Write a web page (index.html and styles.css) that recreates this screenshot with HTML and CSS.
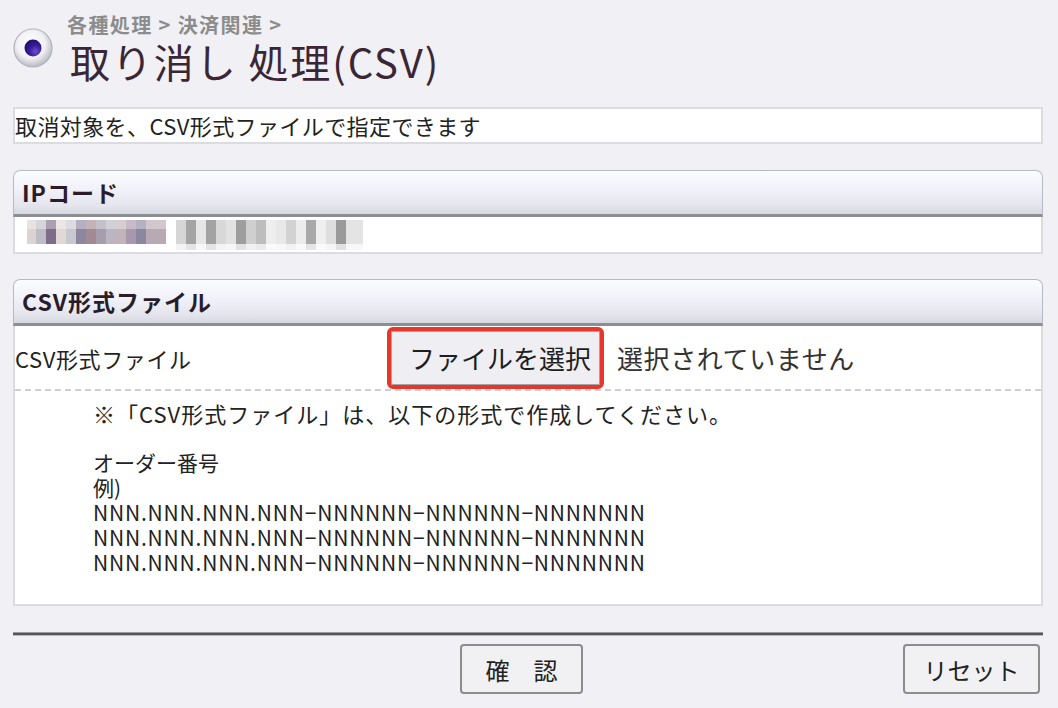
FILE: index.html
```html
<!DOCTYPE html>
<html lang="ja">
<head>
<meta charset="utf-8">
<title>取り消し 処理(CSV)</title>
<link rel="stylesheet" href="styles.css">
</head>
<body>
<div class="page">
  <header class="title-area">
    <svg class="orb" width="40" height="40" viewBox="0 0 40 40">
      <defs>
        <radialGradient id="shell" cx="45%" cy="40%" r="60%">
          <stop offset="0" stop-color="#ffffff"/>
          <stop offset="0.6" stop-color="#f2f2f6"/>
          <stop offset="1" stop-color="#b9b9c2"/>
        </radialGradient>
        <radialGradient id="dot" cx="65%" cy="70%" r="70%">
          <stop offset="0" stop-color="#6a50d0"/>
          <stop offset="0.5" stop-color="#3a1c9c"/>
          <stop offset="1" stop-color="#22106a"/>
        </radialGradient>
      </defs>
      <circle cx="20" cy="20" r="19" fill="url(#shell)" stroke="#b4b4bc" stroke-width="1.2"/>
      <circle cx="20" cy="20" r="8.5" fill="url(#dot)"/>
    </svg>
    <div class="titles">
      <div class="crumb">各種処理 &gt; 決済関連 &gt;</div>
      <h1 class="title">取り消し 処理(CSV)</h1>
    </div>
  </header>

  <div class="desc">取消対象を、CSV形式ファイルで指定できます</div>

  <section class="panel">
    <div class="panel-head">IPコード</div>
    <div class="panel-body ip-body">
      <span class="mosaic m1"></span>
      <span class="mosaic m2"></span>
    </div>
  </section>

  <section class="panel">
    <div class="panel-head">CSV形式ファイル</div>
    <div class="panel-body">
      <div class="file-row">
        <span class="row-label">CSV形式ファイル</span>
        <span class="file-input">
          <span class="file-btn">ファイルを選択</span>
          <span class="no-file">選択されていません</span>
        </span>
      </div>
      <div class="notes">
        <p class="note-lead">※「CSV形式ファイル」は、以下の形式で作成してください。</p>
        <p class="note-fmt">オーダー番号<br>例)<br><span class="nnn">NNN.NNN.NNN.NNN−NNNNNN−NNNNNN−NNNNNNN</span><br><span class="nnn">NNN.NNN.NNN.NNN−NNNNNN−NNNNNN−NNNNNNN</span><br><span class="nnn">NNN.NNN.NNN.NNN−NNNNNN−NNNNNN−NNNNNNN</span></p>
      </div>
    </div>
  </section>

  <div class="rule"></div>
  <div class="actions">
    <span></span>
    <button class="btn btn-confirm">確　認</button>
    <button class="btn btn-reset">リセット</button>
  </div>
</div>
</body>
</html>
```
FILE: styles.css
```css
html, body {
  margin: 0;
  padding: 0;
  background: #f0f0f5;
}
body {
  font-family: "Noto Sans CJK JP", "Liberation Sans", sans-serif;
  color: #222;
}
.page {
  width: 1030px;
  margin-left: 13px;
}
.title-area {
  height: 107px;
  display: flex;
  align-items: flex-start;
}
.orb {
  margin-top: 28px;
  flex: none;
}
.titles {
  margin-left: 14px;
  padding-top: 14px;
}
.crumb {
  font-size: 20px;
  font-weight: bold;
  line-height: 22px;
  letter-spacing: 1.4px;
  color: #8c8c8c;
}
.title {
  margin: 2px 0 0 3px;
  font-size: 40px;
  font-weight: normal;
  line-height: 46px;
  letter-spacing: 1.9px;
  color: #3a2636;
}
.desc {
  background: #fff;
  border: 2px solid #dcdce0;
  height: 33px;
  line-height: 33px;
  font-size: 22px;
  letter-spacing: 0.4px;
  color: #222;
  margin-bottom: 26px;
  white-space: nowrap;
}
.panel {
  margin-bottom: 25px;
}
.panel-head {
  height: 43px;
  line-height: 43px;
  border: 1px solid #b9b9c1;
  border-bottom: 3px solid #8d8d95;
  border-radius: 7px 7px 0 0;
  background: linear-gradient(#fbfcff 0%, #f2f3fa 40%, #e4e5ed 80%, #d6d7df 100%);
  padding-left: 8px;
  font-size: 23px;
  font-weight: bold;
  letter-spacing: 1px;
  color: #2b1c2a;
}
.panel-body {
  background: #fff;
  border: 2px solid #dcdce0;
  border-top: 0;
}
.ip-body {
  height: 35px;
  display: flex;
  align-items: flex-start;
  gap: 10px;
  padding-left: 12px;
}
.mosaic {
  display: block;
  margin-top: 3px;
}
.m1 {
  width: 139px;
  height: 24px;
  background:
    linear-gradient(180deg, rgba(255,255,255,0.35) 0 9px, rgba(255,255,255,0) 9px 24px),
    linear-gradient(90deg, #ddd3d3 0 9px, #bdbdc6 9px 19px, #7e6c88 19px 29px, #e2d8d6 29px 39px, #c8c8d0 39px 49px, #8c86a0 49px 59px, #a28a92 59px 69px, #a79ead 69px 79px, #b9b5c2 79px 89px, #c2b2ba 89px 99px, #a997ad 99px 109px, #8a87a1 109px 119px, #b9a9b2 119px 139px);
}
.m2 {
  width: 187px;
  height: 30px;
  background:
    linear-gradient(180deg, rgba(255,255,255,0) 0 24px, rgba(255,255,255,0.7) 24px 30px),
    linear-gradient(90deg, #d6d6d6 0 10px, #a5a5a5 10px 20px, #e6e6e6 20px 30px, #a3a3a3 30px 40px, #d8d8d8 40px 50px, #e2e2e2 50px 60px, #9e9e9e 60px 70px, #cfcfcf 70px 80px, #bdbdbd 80px 90px, #eeeeee 90px 100px, #e8e8e8 100px 110px, #d2d2d2 110px 120px, #ececec 120px 130px, #a9a9a9 130px 140px, #efefef 140px 150px, #dedede 150px 160px, #9a9a9a 160px 170px, #e4e4e4 170px 187px);
}
.file-row {
  height: 63px;
  display: flex;
  align-items: center;
  border-bottom: 2px dashed #cfcfd2;
}
.row-label {
  width: 376px;
  flex: none;
  font-size: 22px;
  letter-spacing: 0.6px;
  color: #222;
}
.file-input {
  display: flex;
  align-items: center;
}
.file-btn {
  display: block;
  width: 190px;
  height: 52px;
  line-height: 52px;
  padding-left: 17px;
  background: #efeff3;
  border: 1px solid #a3a3a8;
  border-radius: 2px;
  outline: 4px solid #e5372b;
  font-size: 26px;
  color: #1e1e1e;
}
.no-file {
  margin-left: 17px;
  font-size: 26px;
  letter-spacing: 0.6px;
  color: #333;
}
.notes {
  padding: 10px 0 29px 78px;
  font-size: 21px;
  line-height: 25px;
  color: #222;
}
.notes p {
  margin: 0;
}
.note-lead {
  margin-bottom: 24px !important;
  font-size: 22px;
  letter-spacing: 1px;
}
.nnn {
  letter-spacing: 0.8px;
}
.rule {
  margin-top: 26px;
  background: #55555a;
  border-top: 1px solid #9a9aa0;
  border-bottom: 1px solid #b8b8be;
  box-sizing: border-box;
  height: 4px;
}
.actions {
  margin-top: 8px;
  display: grid;
  grid-template-columns: 1fr auto 1fr;
  align-items: start;
}
.btn {
  height: 50px;
  background: #f1f1f4;
  border: 2px solid #8c8c8c;
  border-radius: 4px;
  font-family: "Noto Sans CJK JP", sans-serif;
  font-size: 24px;
  color: #222;
  padding: 0;
}
.btn-confirm {
  width: 123px;
  margin-right: 13px;
}
.btn-reset {
  width: 137px;
  justify-self: end;
  margin-right: 3px;
}
```
